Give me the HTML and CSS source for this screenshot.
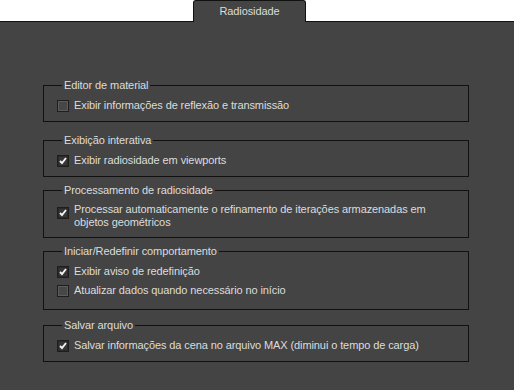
FILE: index.html
```html
<!DOCTYPE html>
<html lang="pt">
<head>
  <meta charset="UTF-8">
  <title>Radiosidade</title>
  <link rel="stylesheet" href="styles.css">
</head>
<body>
  <div id="tabbar">
    <div class="tab">Radiosidade</div>
  </div>

  <div id="panel">
    <fieldset class="group">
      <legend>Editor de material</legend>
      <label class="option"><span class="box"></span>Exibir informações de reflexão e transmissão</label>
    </fieldset>

    <fieldset class="group gap-lg">
      <legend>Exibição interativa</legend>
      <label class="option"><span class="box checked"></span>Exibir radiosidade em viewports</label>
    </fieldset>

    <fieldset class="group">
      <legend>Processamento de radiosidade</legend>
      <label class="option multi"><span class="box checked"></span><span class="wrap">Processar automaticamente o refinamento de iterações armazenadas em objetos geométricos</span></label>
    </fieldset>

    <fieldset class="group tall">
      <legend>Iniciar/Redefinir comportamento</legend>
      <label class="option"><span class="box checked"></span>Exibir aviso de redefinição</label>
      <label class="option"><span class="box"></span>Atualizar dados quando necessário no início</label>
    </fieldset>

    <fieldset class="group gap-md">
      <legend>Salvar arquivo</legend>
      <label class="option"><span class="box checked"></span>Salvar informações da cena no arquivo MAX (diminui o tempo de carga)</label>
    </fieldset>
  </div>
</body>
</html>
```

FILE: styles.css
```css
body {
  margin: 0;
  background: #fff;
  font-family: "Liberation Sans", Arial, sans-serif;
  font-size: 11px;
  letter-spacing: -0.1px;
  color: #dcdcdc;
  height: 390px;
  overflow: hidden;
}

#tabbar {
  display: flex;
  height: 21px;
  padding-left: 193px;
}

.tab {
  width: 111px;
  height: 21px;
  background: #444;
  border: 1px solid #111;
  border-bottom: none;
  border-radius: 3px 3px 0 0;
  text-align: center;
  line-height: 21px;
  position: relative;
  z-index: 1;
  margin-bottom: -1px;
}

#panel {
  background: #444;
  border-top: 1px solid #111;
  padding-top: 57px;
  box-sizing: border-box;
  height: 369px;
}

.group {
  margin: 7px 45px 0 43px;
  padding: 4px 0 6px 13px;
  border: 1px solid #111;
  min-width: 0;
}

.group:first-child {
  margin-top: 0;
}

.group.gap-lg {
  margin-top: 12px;
}

.group.gap-md {
  margin-top: 9px;
}

.group.tall {
  padding-bottom: 9px;
}

legend {
  padding: 0 2px;
  margin-left: 5px;
  line-height: 13px;
}

.option {
  display: flex;
  align-items: center;
  min-height: 19px;
  line-height: 13px;
  padding: 3px 0;
  box-sizing: border-box;
}

.option.multi {
  align-items: flex-start;
  padding: 2px 0;
}

.option.multi .box {
  margin-top: 4px;
}

.wrap {
  max-width: 360px;
}

.box {
  width: 12px;
  height: 12px;
  flex: none;
  box-sizing: border-box;
  border: 1px solid #1e1e1e;
  box-shadow: inset 0 0 0 1px #5c5c5c;
  background: #474747;
  margin-right: 5px;
}

.box.checked {
  background: #363636;
  box-shadow: inset 0 0 0 1px #2a2a2a;
  background-image: url("data:image/svg+xml,%3Csvg xmlns='http://www.w3.org/2000/svg' viewBox='0 0 10 10'%3E%3Cpath d='M2 5l2 2 4-5' fill='none' stroke='%23f2f2f2' stroke-width='1.9'/%3E%3C/svg%3E");
  background-size: 10px 10px;
  background-position: center;
  background-repeat: no-repeat;
}
```
